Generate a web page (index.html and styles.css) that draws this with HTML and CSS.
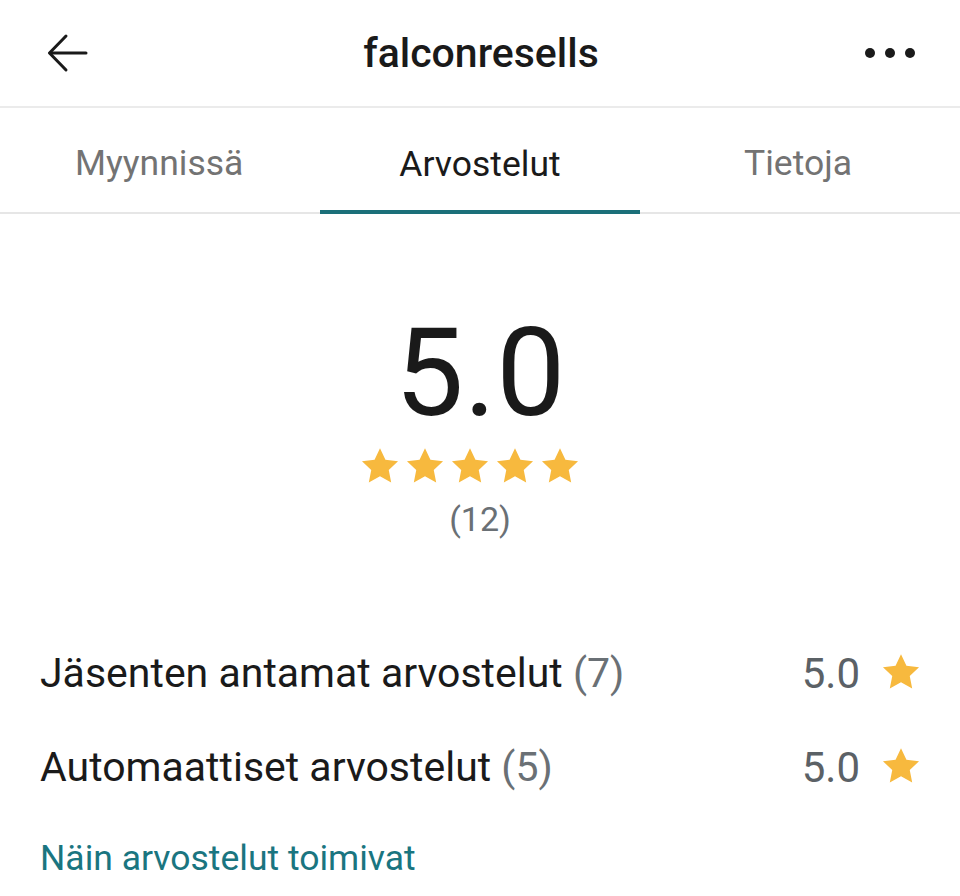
FILE: index.html
```html
<!DOCTYPE html>
<html lang="fi">
<head>
<meta charset="utf-8">
<title>falconresells</title>
<link rel="stylesheet" href="styles.css">
</head>
<body>
<div class="app">
  <header class="topbar">
    <button class="icon-btn back" aria-label="Takaisin">
      <svg width="44" height="44" viewBox="0 0 44 44" fill="none" stroke="#1a1a1a" stroke-width="3" stroke-linecap="round" stroke-linejoin="round">
        <path d="M40 22H4"/>
        <path d="M20 5L3.5 22L20 39"/>
      </svg>
    </button>
    <h1 class="title">falconresells</h1>
    <button class="icon-btn more" aria-label="Lisää">
      <svg width="52" height="12" viewBox="0 0 52 12" fill="#1a1a1a">
        <circle cx="6" cy="6" r="5"/>
        <circle cx="26" cy="6" r="5"/>
        <circle cx="46" cy="6" r="5"/>
      </svg>
    </button>
  </header>

  <nav class="tabs">
    <div class="tab">Myynnissä</div>
    <div class="tab active">Arvostelut</div>
    <div class="tab">Tietoja</div>
  </nav>

  <section class="summary">
    <div class="score">5.0</div>
    <div class="stars">
      <svg class="star" viewBox="0 0 24 24"><path d="M12 1.8l3.1 6.6 7.2.9-5.3 5 1.4 7.1L12 17.9l-6.4 3.5 1.4-7.1-5.3-5 7.2-.9z"/></svg>
      <svg class="star" viewBox="0 0 24 24"><path d="M12 1.8l3.1 6.6 7.2.9-5.3 5 1.4 7.1L12 17.9l-6.4 3.5 1.4-7.1-5.3-5 7.2-.9z"/></svg>
      <svg class="star" viewBox="0 0 24 24"><path d="M12 1.8l3.1 6.6 7.2.9-5.3 5 1.4 7.1L12 17.9l-6.4 3.5 1.4-7.1-5.3-5 7.2-.9z"/></svg>
      <svg class="star" viewBox="0 0 24 24"><path d="M12 1.8l3.1 6.6 7.2.9-5.3 5 1.4 7.1L12 17.9l-6.4 3.5 1.4-7.1-5.3-5 7.2-.9z"/></svg>
      <svg class="star" viewBox="0 0 24 24"><path d="M12 1.8l3.1 6.6 7.2.9-5.3 5 1.4 7.1L12 17.9l-6.4 3.5 1.4-7.1-5.3-5 7.2-.9z"/></svg>
    </div>
    <div class="count">(12)</div>
  </section>

  <section class="breakdown">
    <div class="row">
      <div class="label">Jäsenten antamat arvostelut <span class="muted">(7)</span></div>
      <div class="value">5.0
        <svg class="star small" viewBox="0 0 24 24"><path d="M12 1.8l3.1 6.6 7.2.9-5.3 5 1.4 7.1L12 17.9l-6.4 3.5 1.4-7.1-5.3-5 7.2-.9z"/></svg>
      </div>
    </div>
    <div class="row">
      <div class="label">Automaattiset arvostelut <span class="muted">(5)</span></div>
      <div class="value">5.0
        <svg class="star small" viewBox="0 0 24 24"><path d="M12 1.8l3.1 6.6 7.2.9-5.3 5 1.4 7.1L12 17.9l-6.4 3.5 1.4-7.1-5.3-5 7.2-.9z"/></svg>
      </div>
    </div>
    <a class="link" href="#">Näin arvostelut toimivat</a>
  </section>
</div>
</body>
</html>
```

FILE: styles.css
```css
* { box-sizing: border-box; }
html, body { margin: 0; padding: 0; background: #fff; }
body {
  font-family: Roboto, "Liberation Sans", sans-serif;
  color: #1a1a1a;
  width: 960px;
}
.app { width: 960px; }

.topbar {
  height: 108px;
  display: flex;
  align-items: center;
  justify-content: space-between;
  padding: 0 44px 0 46px;
  border-bottom: 2px solid #ebebeb;
}
.icon-btn {
  background: none;
  border: 0;
  padding: 0;
  display: flex;
  align-items: center;
  width: 52px;
}
.icon-btn.more { justify-content: flex-end; }
.title {
  margin: 0;
  font-size: 41px;
  font-weight: 500;
  color: #1a1a1a;
}

.tabs {
  display: grid;
  grid-template-columns: repeat(3, 1fr);
  height: 106px;
  border-bottom: 2px solid #e6e6e6;
}
.tab {
  display: flex;
  align-items: center;
  justify-content: center;
  font-size: 35.5px;
  color: #737373;
  padding-top: 6px;
}
.tab:first-child { justify-content: flex-start; padding-left: 75px; }
.tab:last-child { justify-content: flex-end; padding-right: 108px; }
.tab.active {
  color: #1a1a1a;
  box-shadow: inset 0 -4px 0 #1b6f79;
  margin-bottom: -2px;
}

.summary {
  display: flex;
  flex-direction: column;
  align-items: center;
  padding-top: 98px;
}
.score {
  font-size: 123px;
  line-height: 1;
  font-weight: 400;
  color: #1a1a1a;
}
.stars {
  display: flex;
  gap: 3px;
  margin-top: 10px;
  margin-right: 20px;
}
.star { width: 42px; height: 42px; fill: #f7b93e; }
.count {
  font-size: 34px;
  color: #6a7075;
  margin-top: 12px;
}

.breakdown {
  padding: 86px 38px 0 40px;
  display: flex;
  flex-direction: column;
}
.row {
  display: flex;
  align-items: center;
  justify-content: space-between;
  height: 94px;
}
.label { font-size: 41px; color: #1a1a1a; padding-top: 2px; }
.muted { color: #6a7075; }
.value {
  display: flex;
  align-items: center;
  gap: 20px;
  font-size: 42px;
  color: #5b6166;
  padding-top: 2px;
}
.value .star.small { width: 42px; height: 42px; margin-top: -3px; }
.link {
  margin-top: 24px;
  font-size: 35.5px;
  color: #1a7580;
  text-decoration: none;
}
```
